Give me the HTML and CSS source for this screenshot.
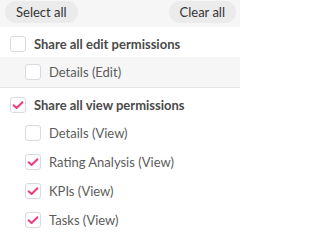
FILE: index.html
```html
<!DOCTYPE html>
<html>
<head>
<meta charset="utf-8">
<link rel="stylesheet" href="styles.css">
</head>
<body>
<div class="panel">
  <div class="toolbar">
    <button class="pill">Select all</button>
    <button class="pill">Clear all</button>
  </div>
  <div class="section">
    <label class="row parent"><span class="box"></span><span class="label">Share all edit permissions</span></label>
    <div class="children shaded">
      <label class="row child"><span class="box"></span><span class="label">Details (Edit)</span></label>
    </div>
  </div>
  <div class="section divided">
    <label class="row parent"><span class="box checked"><svg viewBox="0 0 16 16"><path d="M3.6 8.2 L6.6 11 L12.4 5.2"/></svg></span><span class="label">Share all view permissions</span></label>
    <div class="children">
      <label class="row child"><span class="box"></span><span class="label">Details (View)</span></label>
      <label class="row child"><span class="box checked"><svg viewBox="0 0 16 16"><path d="M3.6 8.2 L6.6 11 L12.4 5.2"/></svg></span><span class="label">Rating Analysis (View)</span></label>
      <label class="row child"><span class="box checked"><svg viewBox="0 0 16 16"><path d="M3.6 8.2 L6.6 11 L12.4 5.2"/></svg></span><span class="label">KPIs (View)</span></label>
      <label class="row child"><span class="box checked"><svg viewBox="0 0 16 16"><path d="M3.6 8.2 L6.6 11 L12.4 5.2"/></svg></span><span class="label">Tasks (View)</span></label>
    </div>
  </div>
</div>
</body>
</html>
```
FILE: styles.css
```css
html, body {
  margin: 0;
  padding: 0;
  background: #ffffff;
}
body {
  font-family: "Lato", "Liberation Sans", sans-serif;
  font-size: 13px;
  color: #555;
  overflow: hidden;
}
.panel {
  width: 240px;
}
.toolbar {
  height: 27px;
  box-sizing: border-box;
  padding: 1px 4px 0 5px;
  background: #f6f6f6;
  display: flex;
  justify-content: space-between;
  align-items: flex-start;
}
.pill {
  height: 22px;
  border: none;
  border-radius: 11px;
  background: #ebebeb;
  color: #333;
  font-family: inherit;
  font-size: 13px;
  padding: 0 11px;
  line-height: 22px;
}
.divided {
  border-top: 1px solid #e3e3e3;
}
.row {
  display: flex;
  align-items: center;
  gap: 8px;
}
.parent {
  padding: 9px 10px 5px;
  font-weight: bold;
  color: #4a4a4a;
}
.child {
  padding: 7px 10px 6px 25px;
  color: #5c5c5c;
}
.shaded {
  background: #f6f6f6;
  padding-bottom: 1px;
}
.box {
  width: 16px;
  height: 16px;
  box-sizing: border-box;
  border: 1.5px solid #d6dae1;
  border-radius: 3px;
  background: #fff;
  flex: none;
  position: relative;
}
.box svg {
  position: absolute;
  left: -1.5px;
  top: -1.5px;
  width: 16px;
  height: 16px;
}
.box svg path {
  fill: none;
  stroke: #ec3b7f;
  stroke-width: 2;
  stroke-linecap: round;
  stroke-linejoin: round;
}
.label {
  line-height: 16px;
  white-space: nowrap;
}
```
